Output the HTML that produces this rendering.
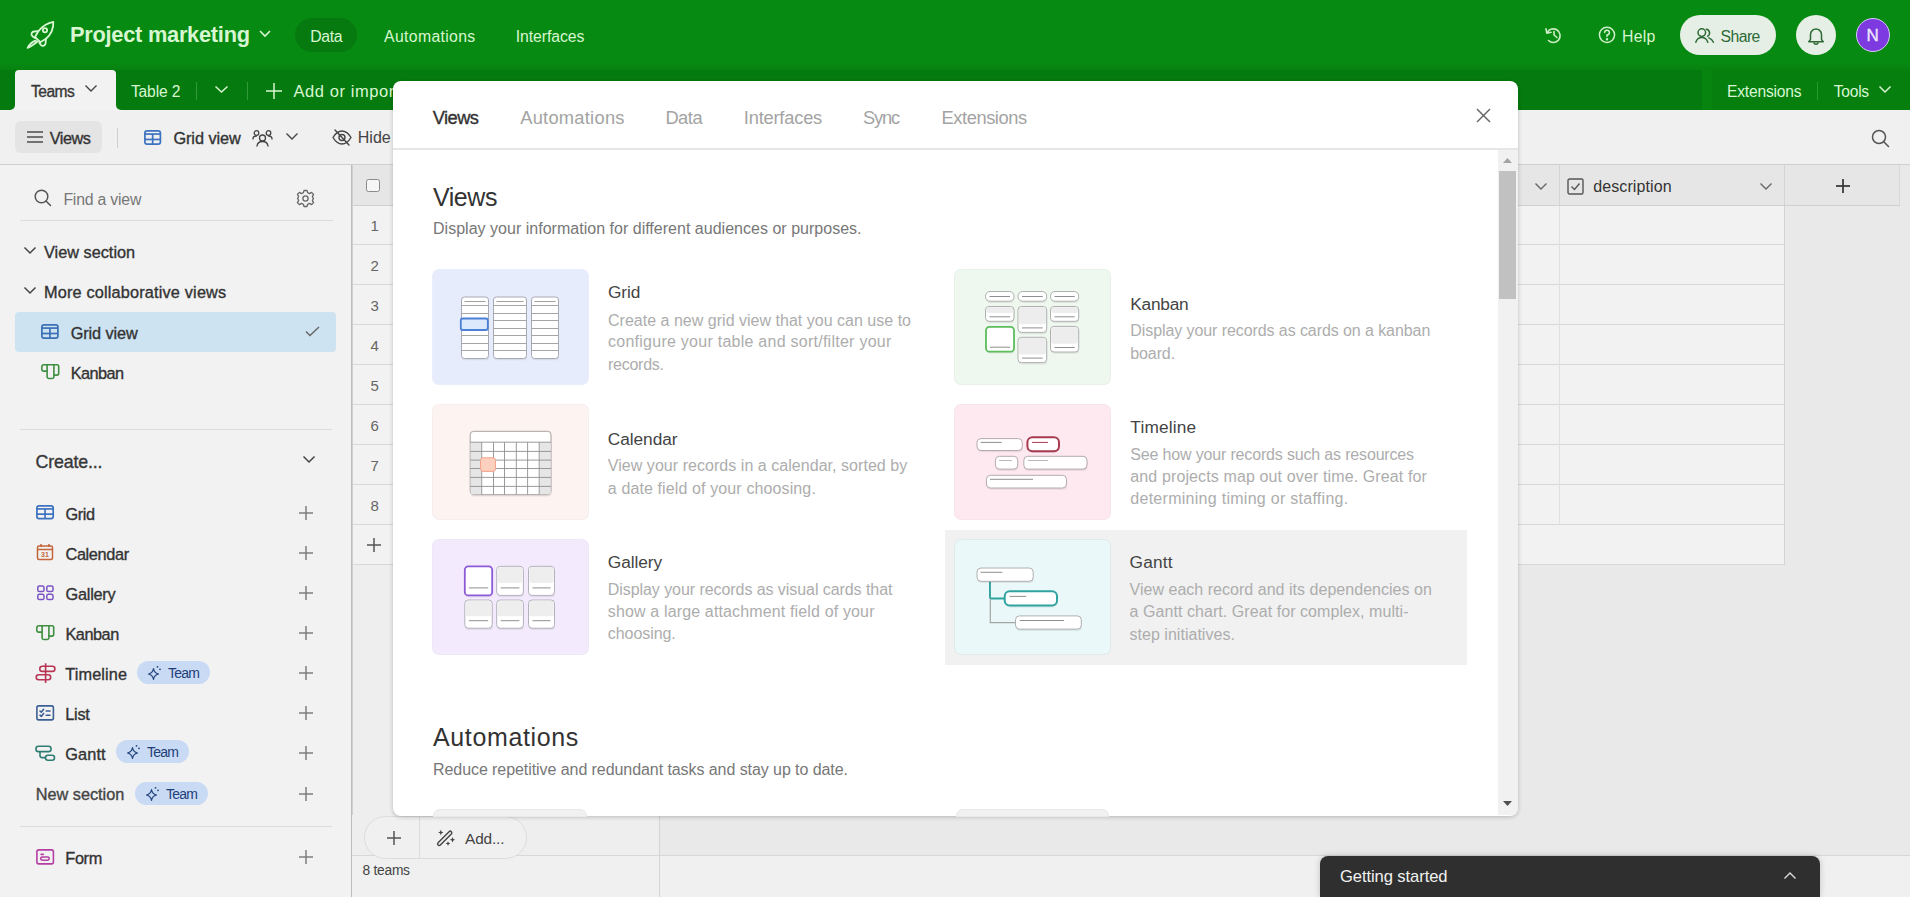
<!DOCTYPE html><html><head><meta charset="utf-8"><style>
html,body{margin:0;padding:0;width:1910px;height:897px;overflow:hidden;background:#f0f0f0}
body{position:relative;font-family:"Liberation Sans", sans-serif}
.t{position:absolute;white-space:nowrap;line-height:0;font-family:"Liberation Sans", sans-serif}
svg{overflow:visible}
</style></head><body>
<div style="position:absolute;left:0px;top:0px;width:1910px;height:897px;background:#f0f0f0"></div>
<div style="position:absolute;left:0px;top:0px;width:1910px;height:70px;background:#078a11"></div>
<div style="position:absolute;left:0px;top:70px;width:1910px;height:40px;background:#057a0e"></div>
<div style="position:absolute;left:0px;top:62px;width:1910px;height:8px;background:linear-gradient(rgba(0,0,0,0),rgba(0,0,0,.06))"></div>
<div style="position:absolute;left:1702px;top:70px;width:10px;height:40px;background:#078a11;opacity:.6"></div>
<div style="position:absolute;left:1712px;top:70px;width:198px;height:40px;background:#067f0f"></div>
<svg style="position:absolute;left:26px;top:20px;" width="30" height="30" viewBox="0 0 30 30" fill="none"><g stroke="#d8f8d4" stroke-width="1.8" stroke-linecap="round" stroke-linejoin="round" fill="none"><path d="M27.3 1.8 C22 2.8 16.5 6 12.5 11 L9 17 L14.2 22.2 L20 18.8 C25 14.5 27.6 8.5 27.3 1.8 Z"/><circle cx="19" cy="10.3" r="2.1"/><path d="M12.3 11.2 L8.3 11.5 A2.7 2.7 0 0 0 6.4 16.2 L9 18"/><path d="M19.9 19 L19.6 23 A2.7 2.7 0 0 1 14.9 24.9 L13.3 22.8"/><path d="M9.8 20.6 C6.5 21.5 3.5 24 1.6 27.9 C5.5 26.3 8.3 24 11.2 21.8"/></g></svg>
<div class="t" style="left:70.00px;top:35.45px;font-size:21.8px;color:#d8f6d2;font-weight:700;letter-spacing:-0.256px;">Project marketing</div>
<svg style="position:absolute;left:258px;top:29px;" width="14" height="10" viewBox="0 0 14 10" fill="none"><path d="M2 2 L7 7 L12 2" stroke="#d8f6d2" stroke-width="1.6" fill="none"/></svg>
<div style="position:absolute;left:295px;top:18px;width:62px;height:34px;background:#067a0f;border-radius:17px"></div>
<div class="t" style="left:310.30px;top:36.53px;font-size:15.8px;color:#d8f6d2;font-weight:400;letter-spacing:-0.339px;">Data</div>
<div class="t" style="left:384.00px;top:36.53px;font-size:15.8px;color:#d8f6d2;font-weight:400;letter-spacing:0.345px;">Automations</div>
<div class="t" style="left:515.80px;top:36.53px;font-size:15.8px;color:#d8f6d2;font-weight:400;letter-spacing:-0.085px;">Interfaces</div>
<svg style="position:absolute;left:1544px;top:26px;" width="20" height="18" viewBox="0 0 20 18" fill="none"><g stroke="#cdeec8" stroke-width="1.6" fill="none" stroke-linecap="round" stroke-linejoin="round"><path d="M3.3 6.5 A6.8 6.8 0 1 1 4.5 14.5"/><path d="M2 2.8 L2.8 7.2 L7 6.3"/><path d="M10 5.5 V9 L13 11.5"/></g></svg>
<svg style="position:absolute;left:1598px;top:26px;" width="18" height="18" viewBox="0 0 18 18" fill="none"><g stroke="#cdeec8" stroke-width="1.5" fill="none"><circle cx="9" cy="8.8" r="7.6"/><path d="M6.6 6.6 A2.4 2.4 0 1 1 9 9 V10.6" stroke-linecap="round"/><circle cx="9" cy="13.2" r=".5" fill="#cdeec8"/></g></svg>
<div class="t" style="left:1622.00px;top:36.53px;font-size:15.8px;color:#d8f6d2;font-weight:400;letter-spacing:0.277px;">Help</div>
<div style="position:absolute;left:1680px;top:15px;width:96px;height:40px;background:#e6efe6;border-radius:20px"></div>
<svg style="position:absolute;left:1695px;top:28px;" width="20" height="16" viewBox="0 0 20 16" fill="none"><g stroke="#2e6a35" stroke-width="1.5" fill="none" stroke-linecap="round"><circle cx="6.8" cy="4.6" r="3.8"/><path d="M0.8 14.3 C2 10.8 4.2 9.6 6.8 9.6 C9.4 9.6 11.6 10.8 12.8 14.3"/><path d="M11.2 1.2 A3.8 3.8 0 0 1 12.6 8.3"/><path d="M13.8 9.9 C15.8 10.6 17.4 12 18.4 14.3"/></g></svg>
<div class="t" style="left:1720.60px;top:36.53px;font-size:15.8px;color:#2e6a35;font-weight:400;letter-spacing:-0.597px;">Share</div>
<div style="position:absolute;left:1796px;top:15px;width:40px;height:40px;background:#e6efe6;border-radius:50%"></div>
<svg style="position:absolute;left:1806px;top:26px;" width="20" height="20" viewBox="0 0 20 20" fill="none"><g stroke="#2e6a35" stroke-width="1.5" fill="none" stroke-linejoin="round"><path d="M4.5 13.5 V8.5 A5.5 5.5 0 0 1 15.5 8.5 V13.5 L17.2 15.8 H2.8 Z"/><path d="M8 16.2 A2 2 0 0 0 12 16.2"/></g></svg>
<div style="position:absolute;left:1856px;top:18px;width:34px;height:34px;background:#7c3ae0;border-radius:50%;box-sizing:border-box;border:1.5px solid #d9c9f5"></div>
<div class="t" style="left:1866.50px;top:35.61px;font-size:17px;color:#efe6ff;font-weight:400;-webkit-text-stroke:0.35px #efe6ff;">N</div>
<div style="position:absolute;left:15px;top:70px;width:101px;height:42px;background:#f2f2f2;border-radius:4px 4px 0 0"></div>
<div style="position:absolute;left:9px;top:104px;width:6px;height:6px;background:#f0f0f0"></div>
<div style="position:absolute;left:5px;top:100px;width:10px;height:10px;background:#057a0e;border-radius:0 0 5px 0"></div>
<div style="position:absolute;left:116px;top:104px;width:6px;height:6px;background:#f0f0f0"></div>
<div style="position:absolute;left:116px;top:100px;width:10px;height:10px;background:#057a0e;border-radius:0 0 0 5px"></div>
<div class="t" style="left:31.00px;top:91.59px;font-size:15.6px;color:#383838;font-weight:400;letter-spacing:-0.511px;-webkit-text-stroke:0.35px #383838;">Teams</div>
<svg style="position:absolute;left:84px;top:84px;" width="14" height="9" viewBox="0 0 14 9" fill="none"><path d="M1.5 1.5 L7 7 L12.5 1.5" stroke="#444" stroke-width="1.4" fill="none"/></svg>
<div class="t" style="left:130.90px;top:91.59px;font-size:15.6px;color:#d8f6d2;font-weight:400;letter-spacing:-0.118px;">Table 2</div>
<div style="position:absolute;left:196px;top:82px;width:1px;height:18px;background:#2f9a37"></div>
<svg style="position:absolute;left:214px;top:85px;" width="16" height="9" viewBox="0 0 16 9" fill="none"><path d="M1.5 1.5 L7.5 7 L13.5 1.5" stroke="#d8f6d2" stroke-width="1.5" fill="none"/></svg>
<div style="position:absolute;left:247px;top:82px;width:1px;height:18px;background:#2f9a37"></div>
<svg style="position:absolute;left:265px;top:82px;" width="18" height="18" viewBox="0 0 18 18" fill="none"><g stroke="#d8f6d2" stroke-width="1.5"><path d="M9 1 V17"/><path d="M1 9 H17"/></g></svg>
<div class="t" style="left:293.50px;top:91.28px;font-size:16.5px;color:#d8f6d2;font-weight:400;letter-spacing:0.576px;">Add or import</div>
<div class="t" style="left:1727.00px;top:91.59px;font-size:15.6px;color:#d8f6d2;font-weight:400;letter-spacing:-0.187px;">Extensions</div>
<div style="position:absolute;left:1817px;top:82px;width:1px;height:18px;background:#2a9a32"></div>
<div class="t" style="left:1833.80px;top:91.59px;font-size:15.6px;color:#d8f6d2;font-weight:400;letter-spacing:-0.257px;">Tools</div>
<svg style="position:absolute;left:1878px;top:85px;" width="14" height="9" viewBox="0 0 14 9" fill="none"><path d="M1.5 1.5 L7 7 L12.5 1.5" stroke="#d8f6d2" stroke-width="1.5" fill="none"/></svg>
<div style="position:absolute;left:0px;top:110px;width:1910px;height:55px;background:#f0f0f0;border-bottom:1px solid #cfcfcf;box-sizing:border-box"></div>
<div style="position:absolute;left:15px;top:121px;width:87px;height:32px;background:#e4e4e4;border-radius:6px"></div>
<svg style="position:absolute;left:26px;top:130px;" width="18" height="14" viewBox="0 0 18 14" fill="none"><g stroke="#555" stroke-width="1.6"><path d="M1 2 H17"/><path d="M1 7 H17"/><path d="M1 12 H17"/></g></svg>
<div class="t" style="left:49.80px;top:138.35px;font-size:16.3px;color:#333;font-weight:400;letter-spacing:-0.499px;-webkit-text-stroke:0.35px #333;">Views</div>
<div style="position:absolute;left:117px;top:128px;width:1px;height:20px;background:#cfcfcf"></div>
<svg style="position:absolute;left:144.3px;top:130.2px;" width="17.3" height="15" viewBox="0 0 17.3 15" fill="none"><g stroke="#3d72c0" stroke-width="1.7" fill="none"><rect x="0.9" y="0.9" width="15.5" height="13.2" rx="2.2"/><path d="M0.9 4.05 H16.400000000000002"/><path d="M0.9 9.45 H16.400000000000002"/><path d="M8.65 4.05 V14.1"/></g></svg>
<div class="t" style="left:173.40px;top:138.35px;font-size:16.3px;color:#333;font-weight:400;letter-spacing:-0.059px;-webkit-text-stroke:0.35px #333;">Grid view</div>
<svg style="position:absolute;left:252px;top:129px;" width="21" height="18" viewBox="0 0 21 18" fill="none"><g stroke="#444" stroke-width="1.3" fill="none" stroke-linecap="round"><circle cx="10.5" cy="9" r="3"/><path d="M5 17 C5.5 13.5 7.5 12.5 10.5 12.5 C13.5 12.5 15.5 13.5 16 17"/><circle cx="4.5" cy="4" r="2.3"/><circle cx="16.5" cy="4" r="2.3"/><path d="M1 10 C1 8 2.5 7 4.5 7"/><path d="M20 10 C20 8 18.5 7 16.5 7"/></g></svg>
<svg style="position:absolute;left:285px;top:132px;" width="14" height="9" viewBox="0 0 14 9" fill="none"><path d="M1.5 1.5 L7 7 L12.5 1.5" stroke="#444" stroke-width="1.4" fill="none"/></svg>
<svg style="position:absolute;left:332px;top:129px;" width="20" height="17" viewBox="0 0 20 17" fill="none"><g stroke="#444" stroke-width="1.4" fill="none" stroke-linecap="round"><path d="M1 8.5 C4 3.5 7 2 10 2 C13 2 16 3.5 19 8.5 C16 13.5 13 15 10 15 C7 15 4 13.5 1 8.5 Z"/><circle cx="10" cy="8.5" r="3"/><path d="M3 1 L17 16"/></g></svg>
<div class="t" style="left:357.70px;top:138.46px;font-size:16px;color:#444;font-weight:400;letter-spacing:0.040px;">Hide</div>
<svg style="position:absolute;left:1871px;top:129px;" width="19" height="19" viewBox="0 0 19 19" fill="none"><g stroke="#555" stroke-width="1.5" fill="none" stroke-linecap="round"><circle cx="8" cy="8" r="6.5"/><path d="M13 13 L17.5 17.5"/></g></svg>
<div style="position:absolute;left:0px;top:165px;width:352px;height:732px;background:#f2f2f2"></div>
<div style="position:absolute;left:351px;top:165px;width:1px;height:732px;background:#bcbcbc"></div>
<svg style="position:absolute;left:34px;top:189px;" width="18" height="18" viewBox="0 0 18 18" fill="none"><g stroke="#555" stroke-width="1.5" fill="none" stroke-linecap="round"><circle cx="7.5" cy="7.5" r="6.3"/><path d="M12 12 L16.5 16.5"/></g></svg>
<div class="t" style="left:63.40px;top:199.53px;font-size:15.8px;color:#777;font-weight:400;letter-spacing:-0.195px;">Find a view</div>
<svg style="position:absolute;left:296px;top:189px;" width="19" height="19" viewBox="0 0 19 19" fill="none"><g stroke="#666" stroke-width="1.3" fill="none"><circle cx="9.5" cy="9.5" r="2.6"/><path d="M8 1.5 H11 L11.6 3.7 L13.6 4.6 L15.6 3.4 L17.6 5.4 L16.4 7.4 L17.3 9.4 L17.5 9.5 L17.3 9.6 L16.4 11.6 L17.6 13.6 L15.6 15.6 L13.6 14.4 L11.6 15.3 L11 17.5 H8 L7.4 15.3 L5.4 14.4 L3.4 15.6 L1.4 13.6 L2.6 11.6 L1.7 9.6 L1.5 9.5 L1.7 9.4 L2.6 7.4 L1.4 5.4 L3.4 3.4 L5.4 4.6 L7.4 3.7 Z" stroke-linejoin="round"/></g></svg>
<div style="position:absolute;left:20px;top:220px;width:313px;height:1px;background:#dcdcdc"></div>
<svg style="position:absolute;left:23px;top:246px;" width="14" height="9" viewBox="0 0 14 9" fill="none"><path d="M1.5 1.5 L7 7 L12.5 1.5" stroke="#444" stroke-width="1.5" fill="none"/></svg>
<div class="t" style="left:44.00px;top:252.35px;font-size:16.3px;color:#333;font-weight:400;letter-spacing:0.000px;-webkit-text-stroke:0.35px #333;">View section</div>
<svg style="position:absolute;left:23px;top:286px;" width="14" height="9" viewBox="0 0 14 9" fill="none"><path d="M1.5 1.5 L7 7 L12.5 1.5" stroke="#444" stroke-width="1.5" fill="none"/></svg>
<div class="t" style="left:44.00px;top:292.35px;font-size:16.3px;color:#333;font-weight:400;letter-spacing:0.170px;-webkit-text-stroke:0.35px #333;">More collaborative views</div>
<div style="position:absolute;left:15px;top:312px;width:321px;height:40px;background:#cde3f1;border-radius:4px"></div>
<svg style="position:absolute;left:41.1px;top:324.3px;" width="17.8" height="15.1" viewBox="0 0 17.8 15.1" fill="none"><g stroke="#3b6fb6" stroke-width="1.7" fill="none"><rect x="0.9" y="0.9" width="16.0" height="13.299999999999999" rx="2.2"/><path d="M0.9 4.08 H16.900000000000002"/><path d="M0.9 9.51 H16.900000000000002"/><path d="M8.90 4.08 V14.2"/></g></svg>
<div class="t" style="left:70.70px;top:332.85px;font-size:16.3px;color:#333;font-weight:400;letter-spacing:-0.109px;-webkit-text-stroke:0.35px #333;">Grid view</div>
<svg style="position:absolute;left:305px;top:326px;" width="15" height="11" viewBox="0 0 15 11" fill="none"><path d="M1 5.5 L5 9.5 L14 1" stroke="#666" stroke-width="1.4" fill="none"/></svg>
<svg style="position:absolute;left:40.6px;top:364px;" width="19" height="17" viewBox="0 0 19 17" fill="none"><g stroke="#3d8f3f" stroke-width="1.6" fill="none" stroke-linejoin="round"><path d="M2.8 0.8 H16.2 A1.5 1.5 0 0 1 17.7 2.3 V9.3 A1.8 1.8 0 0 1 15.9 11.1 H12.9 V12.7 A1.8 1.8 0 0 1 11.1 14.5 H7.9 A1.8 1.8 0 0 1 6.1 12.7 V7.1 H2.6 A1.8 1.8 0 0 1 0.8 5.3 V2.8 A2 2 0 0 1 2.8 0.8 Z"/><path d="M6.1 0.8 V7.1"/><path d="M12.9 0.8 V11.1"/></g></svg>
<div class="t" style="left:70.70px;top:372.85px;font-size:16.3px;color:#333;font-weight:400;letter-spacing:-0.547px;-webkit-text-stroke:0.35px #333;">Kanban</div>
<div style="position:absolute;left:20px;top:429px;width:312px;height:1px;background:#dcdcdc"></div>
<div class="t" style="left:35.60px;top:461.83px;font-size:17.8px;color:#383838;font-weight:400;letter-spacing:-0.170px;-webkit-text-stroke:0.35px #383838;">Create...</div>
<svg style="position:absolute;left:302px;top:455px;" width="14" height="9" viewBox="0 0 14 9" fill="none"><path d="M1.5 1.5 L7 7 L12.5 1.5" stroke="#444" stroke-width="1.5" fill="none"/></svg>
<svg style="position:absolute;left:36px;top:505.4px;" width="18.1" height="14.5" viewBox="0 0 18.1 14.5" fill="none"><g stroke="#3d72c0" stroke-width="1.7" fill="none"><rect x="0.9" y="0.9" width="16.3" height="12.7" rx="2.2"/><path d="M0.9 3.92 H17.200000000000003"/><path d="M0.9 9.13 H17.200000000000003"/><path d="M9.05 3.92 V13.6"/></g></svg>
<div class="t" style="left:65.50px;top:514.15px;font-size:16.3px;color:#333;font-weight:400;letter-spacing:-0.436px;-webkit-text-stroke:0.35px #333;">Grid</div>
<svg style="position:absolute;left:298px;top:505px;" width="16" height="16" viewBox="0 0 16 16" fill="none"><g stroke="#777" stroke-width="1.4"><path d="M8 1 V15"/><path d="M1 8 H15"/></g></svg>
<svg style="position:absolute;left:36px;top:543px;" width="18" height="18" viewBox="0 0 18 18" fill="none"><g stroke="#c4643a" stroke-width="1.5" fill="none"><rect x="1.5" y="3" width="15" height="13.5" rx="1.5"/><path d="M1.5 6.5 H16.5"/><path d="M5 1 V4 M13 1 V4"/></g><text x="9" y="14.3" font-size="7" font-family="Liberation Sans" font-weight="700" fill="#c4643a" text-anchor="middle">31</text></svg>
<div class="t" style="left:65.50px;top:553.95px;font-size:16.3px;color:#333;font-weight:400;letter-spacing:-0.354px;-webkit-text-stroke:0.35px #333;">Calendar</div>
<svg style="position:absolute;left:298px;top:545px;" width="16" height="16" viewBox="0 0 16 16" fill="none"><g stroke="#777" stroke-width="1.4"><path d="M8 1 V15"/><path d="M1 8 H15"/></g></svg>
<svg style="position:absolute;left:36px;top:584px;" width="19" height="17" viewBox="0 0 19 17" fill="none"><g stroke="#7b52c4" stroke-width="1.5" fill="none"><rect x="1.8" y="2" width="6.2" height="5.6" rx="1.6"/><rect x="10.8" y="2" width="6.2" height="5.6" rx="1.6"/><rect x="1.8" y="10.3" width="6.2" height="5.3" rx="1.6"/><rect x="10.8" y="10.3" width="6.2" height="5.3" rx="1.6"/></g></svg>
<div class="t" style="left:65.50px;top:594.05px;font-size:16.3px;color:#333;font-weight:400;letter-spacing:-0.229px;-webkit-text-stroke:0.35px #333;">Gallery</div>
<svg style="position:absolute;left:298px;top:585px;" width="16" height="16" viewBox="0 0 16 16" fill="none"><g stroke="#777" stroke-width="1.4"><path d="M8 1 V15"/><path d="M1 8 H15"/></g></svg>
<svg style="position:absolute;left:35.6px;top:624.5px;" width="19" height="17" viewBox="0 0 19 17" fill="none"><g stroke="#3d8f3f" stroke-width="1.6" fill="none" stroke-linejoin="round"><path d="M2.8 0.8 H16.2 A1.5 1.5 0 0 1 17.7 2.3 V9.3 A1.8 1.8 0 0 1 15.9 11.1 H12.9 V12.7 A1.8 1.8 0 0 1 11.1 14.5 H7.9 A1.8 1.8 0 0 1 6.1 12.7 V7.1 H2.6 A1.8 1.8 0 0 1 0.8 5.3 V2.8 A2 2 0 0 1 2.8 0.8 Z"/><path d="M6.1 0.8 V7.1"/><path d="M12.9 0.8 V11.1"/></g></svg>
<div class="t" style="left:65.50px;top:634.05px;font-size:16.3px;color:#333;font-weight:400;letter-spacing:-0.487px;-webkit-text-stroke:0.35px #333;">Kanban</div>
<svg style="position:absolute;left:298px;top:625px;" width="16" height="16" viewBox="0 0 16 16" fill="none"><g stroke="#777" stroke-width="1.4"><path d="M8 1 V15"/><path d="M1 8 H15"/></g></svg>
<svg style="position:absolute;left:34px;top:662px;" width="22" height="22" viewBox="0 0 22 22" fill="none"><g stroke="#b83556" stroke-width="1.6" fill="none" stroke-linejoin="round"><path d="M11.6 1.3 V21"/><rect x="5.8" y="4.3" width="15.1" height="5.1" rx="2.5"/><rect x="2.2" y="12.7" width="14.5" height="5.1" rx="2.5"/></g></svg>
<div class="t" style="left:65.30px;top:673.85px;font-size:16.3px;color:#333;font-weight:400;letter-spacing:0.105px;-webkit-text-stroke:0.35px #333;">Timeline</div>
<div style="position:absolute;left:137px;top:661px;width:73px;height:23px;background:#c9daf5;border-radius:12px"></div>
<svg style="position:absolute;left:147px;top:665px;" width="16" height="16" viewBox="0 0 16 16" fill="none"><path d="M6.5 3.5 C7 7 8 8.2 11.5 9 C8 9.8 7 11 6.5 14.5 C6 11 5 9.8 1.5 9 C5 8.2 6 7 6.5 3.5 Z" stroke="#26487f" stroke-width="1.2" fill="none" stroke-linejoin="round"/><circle cx="10.5" cy="1.8" r=".9" fill="#26487f"/><circle cx="13" cy="4.3" r=".9" fill="#26487f"/></svg>
<div class="t" style="left:168.00px;top:672.65px;font-size:14px;color:#1e3f7a;font-weight:400;letter-spacing:-0.743px;">Team</div>
<svg style="position:absolute;left:298px;top:665px;" width="16" height="16" viewBox="0 0 16 16" fill="none"><g stroke="#777" stroke-width="1.4"><path d="M8 1 V15"/><path d="M1 8 H15"/></g></svg>
<svg style="position:absolute;left:35px;top:704px;" width="20" height="18" viewBox="0 0 20 18" fill="none"><g stroke="#3c5f95" stroke-width="1.6" fill="none" stroke-linecap="round" stroke-linejoin="round"><rect x="1.9" y="1.9" width="16.5" height="14" rx="1.8"/><path d="M5 7 L6.3 8.2 L8.6 5.3"/><path d="M5 11.2 L6.3 12.4 L8.6 9.5"/><path d="M11.2 7 H15 M11.2 11.3 H15"/></g></svg>
<div class="t" style="left:65.30px;top:714.05px;font-size:16.3px;color:#333;font-weight:400;letter-spacing:-0.282px;-webkit-text-stroke:0.35px #333;">List</div>
<svg style="position:absolute;left:298px;top:705px;" width="16" height="16" viewBox="0 0 16 16" fill="none"><g stroke="#777" stroke-width="1.4"><path d="M8 1 V15"/><path d="M1 8 H15"/></g></svg>
<svg style="position:absolute;left:34px;top:744px;" width="22" height="18" viewBox="0 0 22 18" fill="none"><g stroke="#2f7d72" stroke-width="1.6" fill="none" stroke-linejoin="round"><rect x="2" y="2.3" width="15" height="5.3" rx="2.4"/><rect x="11.5" y="11.2" width="9" height="5" rx="2.4"/><path d="M6 7.6 V11.6 A2 2 0 0 0 8 13.6 H11.5"/></g></svg>
<div class="t" style="left:65.30px;top:754.05px;font-size:16.3px;color:#333;font-weight:400;letter-spacing:0.112px;-webkit-text-stroke:0.35px #333;">Gantt</div>
<div style="position:absolute;left:116px;top:740px;width:73px;height:23px;background:#c9daf5;border-radius:12px"></div>
<svg style="position:absolute;left:126px;top:744px;" width="16" height="16" viewBox="0 0 16 16" fill="none"><path d="M6.5 3.5 C7 7 8 8.2 11.5 9 C8 9.8 7 11 6.5 14.5 C6 11 5 9.8 1.5 9 C5 8.2 6 7 6.5 3.5 Z" stroke="#26487f" stroke-width="1.2" fill="none" stroke-linejoin="round"/><circle cx="10.5" cy="1.8" r=".9" fill="#26487f"/><circle cx="13" cy="4.3" r=".9" fill="#26487f"/></svg>
<div class="t" style="left:147.00px;top:751.65px;font-size:14px;color:#1e3f7a;font-weight:400;letter-spacing:-0.743px;">Team</div>
<svg style="position:absolute;left:298px;top:745px;" width="16" height="16" viewBox="0 0 16 16" fill="none"><g stroke="#777" stroke-width="1.4"><path d="M8 1 V15"/><path d="M1 8 H15"/></g></svg>
<div class="t" style="left:35.80px;top:794.05px;font-size:16.3px;color:#444;font-weight:400;letter-spacing:-0.025px;-webkit-text-stroke:0.35px #444;">New section</div>
<div style="position:absolute;left:135px;top:782px;width:73px;height:23px;background:#c9daf5;border-radius:12px"></div>
<svg style="position:absolute;left:145px;top:786px;" width="16" height="16" viewBox="0 0 16 16" fill="none"><path d="M6.5 3.5 C7 7 8 8.2 11.5 9 C8 9.8 7 11 6.5 14.5 C6 11 5 9.8 1.5 9 C5 8.2 6 7 6.5 3.5 Z" stroke="#26487f" stroke-width="1.2" fill="none" stroke-linejoin="round"/><circle cx="10.5" cy="1.8" r=".9" fill="#26487f"/><circle cx="13" cy="4.3" r=".9" fill="#26487f"/></svg>
<div class="t" style="left:166.00px;top:793.65px;font-size:14px;color:#1e3f7a;font-weight:400;letter-spacing:-0.743px;">Team</div>
<svg style="position:absolute;left:298px;top:786px;" width="16" height="16" viewBox="0 0 16 16" fill="none"><g stroke="#777" stroke-width="1.4"><path d="M8 1 V15"/><path d="M1 8 H15"/></g></svg>
<div style="position:absolute;left:20px;top:826px;width:312px;height:1px;background:#dcdcdc"></div>
<svg style="position:absolute;left:35px;top:848px;" width="20" height="17" viewBox="0 0 20 17" fill="none"><g stroke="#b53fa5" stroke-width="1.6" fill="none" stroke-linecap="round"><rect x="1.9" y="1.9" width="16.5" height="14" rx="1.8"/><path d="M6.2 6.4 H8.2"/><rect x="5.7" y="9" width="8.5" height="3.2" rx="1.6"/></g></svg>
<div class="t" style="left:65.30px;top:858.35px;font-size:16.3px;color:#333;font-weight:400;letter-spacing:-0.354px;-webkit-text-stroke:0.35px #333;">Form</div>
<svg style="position:absolute;left:298px;top:849px;" width="16" height="16" viewBox="0 0 16 16" fill="none"><g stroke="#777" stroke-width="1.4"><path d="M8 1 V15"/><path d="M1 8 H15"/></g></svg>
<div style="position:absolute;left:352px;top:165px;width:1558px;height:690px;background:#e9e9e9"></div>
<div style="position:absolute;left:352px;top:165px;width:41px;height:41px;background:#e6e6e6;border-bottom:1px solid #d0d0d0;box-sizing:border-box"></div>
<div style="position:absolute;left:366px;top:179px;width:12px;height:11px;border:1px solid #8a8a8a;border-radius:2.5px;background:#f6f6f6"></div>
<div style="position:absolute;left:352px;top:205px;width:41px;height:40px;background:#f2f2f2;border-bottom:1px solid #d8d8d8;box-sizing:border-box"></div>
<div class="t" style="left:370.50px;top:226.40px;font-size:15px;color:#666;font-weight:400;">1</div>
<div style="position:absolute;left:352px;top:245px;width:41px;height:40px;background:#f2f2f2;border-bottom:1px solid #d8d8d8;box-sizing:border-box"></div>
<div class="t" style="left:370.50px;top:266.40px;font-size:15px;color:#666;font-weight:400;">2</div>
<div style="position:absolute;left:352px;top:285px;width:41px;height:40px;background:#f2f2f2;border-bottom:1px solid #d8d8d8;box-sizing:border-box"></div>
<div class="t" style="left:370.50px;top:306.40px;font-size:15px;color:#666;font-weight:400;">3</div>
<div style="position:absolute;left:352px;top:325px;width:41px;height:40px;background:#f2f2f2;border-bottom:1px solid #d8d8d8;box-sizing:border-box"></div>
<div class="t" style="left:370.50px;top:346.40px;font-size:15px;color:#666;font-weight:400;">4</div>
<div style="position:absolute;left:352px;top:365px;width:41px;height:40px;background:#f2f2f2;border-bottom:1px solid #d8d8d8;box-sizing:border-box"></div>
<div class="t" style="left:370.50px;top:386.40px;font-size:15px;color:#666;font-weight:400;">5</div>
<div style="position:absolute;left:352px;top:405px;width:41px;height:40px;background:#f2f2f2;border-bottom:1px solid #d8d8d8;box-sizing:border-box"></div>
<div class="t" style="left:370.50px;top:426.40px;font-size:15px;color:#666;font-weight:400;">6</div>
<div style="position:absolute;left:352px;top:445px;width:41px;height:40px;background:#f2f2f2;border-bottom:1px solid #d8d8d8;box-sizing:border-box"></div>
<div class="t" style="left:370.50px;top:466.40px;font-size:15px;color:#666;font-weight:400;">7</div>
<div style="position:absolute;left:352px;top:485px;width:41px;height:40px;background:#f2f2f2;border-bottom:1px solid #d8d8d8;box-sizing:border-box"></div>
<div class="t" style="left:370.50px;top:506.40px;font-size:15px;color:#666;font-weight:400;">8</div>
<div style="position:absolute;left:352px;top:525px;width:41px;height:40px;background:#f2f2f2;border-bottom:1px solid #d8d8d8;box-sizing:border-box"></div>
<div style="position:absolute;left:352px;top:565px;width:41px;height:250px;background:#eeeeee"></div>
<div style="position:absolute;left:352px;top:165px;width:1px;height:690px;background:#d0d0d0"></div>
<svg style="position:absolute;left:366px;top:537px;" width="16" height="16" viewBox="0 0 16 16" fill="none"><g stroke="#555" stroke-width="1.5"><path d="M8 1 V15"/><path d="M1 8 H15"/></g></svg>
<div style="position:absolute;left:1518px;top:165px;width:267px;height:41px;background:#e6e6e6;border-bottom:1px solid #d0d0d0;box-sizing:border-box"></div>
<div style="position:absolute;left:1785px;top:165px;width:115px;height:41px;background:#e6e6e6;border-bottom:1px solid #d0d0d0;border-right:1px solid #d8d8d8;box-sizing:border-box"></div>
<div style="position:absolute;left:1559px;top:165px;width:1px;height:40px;background:#d4d4d4"></div>
<div style="position:absolute;left:1784px;top:165px;width:1px;height:400px;background:#d4d4d4"></div>
<svg style="position:absolute;left:1534px;top:182px;" width="14" height="9" viewBox="0 0 14 9" fill="none"><path d="M1.5 1.5 L7 7 L12.5 1.5" stroke="#666" stroke-width="1.4" fill="none"/></svg>
<svg style="position:absolute;left:1567px;top:178px;" width="17" height="17" viewBox="0 0 17 17" fill="none"><g stroke="#555" stroke-width="1.4" fill="none"><rect x="1" y="1" width="15" height="15" rx="1.5"/><path d="M4.5 8.5 L7.5 11.5 L12.5 5.5"/></g></svg>
<div class="t" style="left:1593.20px;top:187.16px;font-size:16px;color:#333;font-weight:400;letter-spacing:0.104px;">description</div>
<svg style="position:absolute;left:1759px;top:182px;" width="14" height="9" viewBox="0 0 14 9" fill="none"><path d="M1.5 1.5 L7 7 L12.5 1.5" stroke="#666" stroke-width="1.4" fill="none"/></svg>
<svg style="position:absolute;left:1835px;top:178px;" width="16" height="16" viewBox="0 0 16 16" fill="none"><g stroke="#333" stroke-width="1.7"><path d="M8 1 V15"/><path d="M1 8 H15"/></g></svg>
<div style="position:absolute;left:1518px;top:205px;width:266px;height:40px;background:#f2f2f2;border-bottom:1px solid #d8d8d8;box-sizing:border-box"></div>
<div style="position:absolute;left:1559px;top:205px;width:1px;height:40px;background:#e0e0e0"></div>
<div style="position:absolute;left:1518px;top:245px;width:266px;height:40px;background:#f2f2f2;border-bottom:1px solid #d8d8d8;box-sizing:border-box"></div>
<div style="position:absolute;left:1559px;top:245px;width:1px;height:40px;background:#e0e0e0"></div>
<div style="position:absolute;left:1518px;top:285px;width:266px;height:40px;background:#f2f2f2;border-bottom:1px solid #d8d8d8;box-sizing:border-box"></div>
<div style="position:absolute;left:1559px;top:285px;width:1px;height:40px;background:#e0e0e0"></div>
<div style="position:absolute;left:1518px;top:325px;width:266px;height:40px;background:#f2f2f2;border-bottom:1px solid #d8d8d8;box-sizing:border-box"></div>
<div style="position:absolute;left:1559px;top:325px;width:1px;height:40px;background:#e0e0e0"></div>
<div style="position:absolute;left:1518px;top:365px;width:266px;height:40px;background:#f2f2f2;border-bottom:1px solid #d8d8d8;box-sizing:border-box"></div>
<div style="position:absolute;left:1559px;top:365px;width:1px;height:40px;background:#e0e0e0"></div>
<div style="position:absolute;left:1518px;top:405px;width:266px;height:40px;background:#f2f2f2;border-bottom:1px solid #d8d8d8;box-sizing:border-box"></div>
<div style="position:absolute;left:1559px;top:405px;width:1px;height:40px;background:#e0e0e0"></div>
<div style="position:absolute;left:1518px;top:445px;width:266px;height:40px;background:#f2f2f2;border-bottom:1px solid #d8d8d8;box-sizing:border-box"></div>
<div style="position:absolute;left:1559px;top:445px;width:1px;height:40px;background:#e0e0e0"></div>
<div style="position:absolute;left:1518px;top:485px;width:266px;height:40px;background:#f2f2f2;border-bottom:1px solid #d8d8d8;box-sizing:border-box"></div>
<div style="position:absolute;left:1559px;top:485px;width:1px;height:40px;background:#e0e0e0"></div>
<div style="position:absolute;left:1518px;top:525px;width:266px;height:40px;background:#f2f2f2;border-bottom:1px solid #d8d8d8;box-sizing:border-box"></div>
<div style="position:absolute;left:352px;top:205px;width:41px;height:1px;background:#d0d0d0"></div>
<div style="position:absolute;left:1518px;top:205px;width:382px;height:1px;background:#d0d0d0"></div>
<div style="position:absolute;left:352px;top:855px;width:1558px;height:42px;background:#f0f0f0;border-top:1px solid #d8d8d8;box-sizing:border-box"></div>
<div style="position:absolute;left:352px;top:815px;width:308px;height:40px;background:#eeeeee"></div>
<div style="position:absolute;left:659px;top:815px;width:1px;height:82px;background:#d4d4d4"></div>
<div class="t" style="left:362.50px;top:871.22px;font-size:13.8px;color:#444;font-weight:400;letter-spacing:-0.260px;">8 teams</div>
<div style="position:absolute;left:364px;top:816px;width:163px;height:43px;background:#f0f0f0;border:1px solid #dcdcdc;border-radius:22px;box-sizing:border-box"></div>
<div style="position:absolute;left:419px;top:816px;width:1px;height:43px;background:#dcdcdc"></div>
<svg style="position:absolute;left:386px;top:830px;" width="16" height="16" viewBox="0 0 16 16" fill="none"><g stroke="#555" stroke-width="1.5"><path d="M8 1 V15"/><path d="M1 8 H15"/></g></svg>
<svg style="position:absolute;left:435px;top:828px;" width="20" height="20" viewBox="0 0 20 20" fill="none"><path d="M4.2 15.8 L15.2 4.8" stroke="#444" stroke-width="4.6" stroke-linecap="round"/><path d="M4.2 15.8 L15.2 4.8" stroke="#f0f0f0" stroke-width="1.8" stroke-linecap="round"/><g fill="#444"><path d="M5.8 1.8 L6.6 3.7 L8.5 4.5 L6.6 5.3 L5.8 7.2 L5 5.3 L3.1 4.5 L5 3.7 Z"/><path d="M17.5 9 L18.3 10.9 L20.2 11.7 L18.3 12.5 L17.5 14.4 L16.7 12.5 L14.8 11.7 L16.7 10.9 Z"/><path d="M13 13.2 L13.7 14.8 L15.3 15.5 L13.7 16.2 L13 17.8 L12.3 16.2 L10.7 15.5 L12.3 14.8 Z"/></g></svg>
<div class="t" style="left:465.00px;top:839.16px;font-size:15.4px;color:#444;font-weight:400;letter-spacing:-0.134px;">Add...</div>
<div style="position:absolute;left:1320px;top:856px;width:500px;height:41px;background:#2f2f2f;border-radius:8px 8px 0 0;box-shadow:0 0 6px rgba(0,0,0,.2)"></div>
<div class="t" style="left:1340.00px;top:877.25px;font-size:16.6px;color:#f2f2f2;font-weight:400;letter-spacing:-0.093px;">Getting started</div>
<svg style="position:absolute;left:1783px;top:871px;" width="14" height="9" viewBox="0 0 14 9" fill="none"><path d="M1.5 7.5 L7 2 L12.5 7.5" stroke="#ddd" stroke-width="1.4" fill="none"/></svg>
<div style="position:absolute;left:393px;top:81px;width:1125px;height:735px;background:#fff;border-radius:8px;box-shadow:0 1px 4px rgba(0,0,0,.22)"></div>
<div class="t" style="left:432.80px;top:118.26px;font-size:18.3px;color:#333;font-weight:400;letter-spacing:-0.574px;-webkit-text-stroke:0.35px #333;">Views</div>
<div class="t" style="left:520.20px;top:118.26px;font-size:18.3px;color:#a3a3a3;font-weight:400;letter-spacing:0.265px;">Automations</div>
<div class="t" style="left:665.40px;top:118.26px;font-size:18.3px;color:#a3a3a3;font-weight:400;letter-spacing:-0.468px;">Data</div>
<div class="t" style="left:743.80px;top:118.26px;font-size:18.3px;color:#a3a3a3;font-weight:400;letter-spacing:-0.204px;">Interfaces</div>
<div class="t" style="left:863.00px;top:118.26px;font-size:18.3px;color:#a3a3a3;font-weight:400;letter-spacing:-1.139px;">Sync</div>
<div class="t" style="left:941.50px;top:118.26px;font-size:18.3px;color:#a3a3a3;font-weight:400;letter-spacing:-0.421px;">Extensions</div>
<div style="position:absolute;left:393px;top:148px;width:1125px;height:2px;background:#e6e6e6"></div>
<svg style="position:absolute;left:1476px;top:108px;" width="15" height="15" viewBox="0 0 15 15" fill="none"><g stroke="#666" stroke-width="1.5"><path d="M1 1 L14 14"/><path d="M14 1 L1 14"/></g></svg>
<div style="position:absolute;left:1498px;top:150px;width:20px;height:665px;background:#f1f1f1;border-radius:0 0 8px 0"></div>
<div style="position:absolute;left:1499px;top:171px;width:17px;height:128px;background:#c1c1c1"></div>
<svg style="position:absolute;left:1502px;top:157px;" width="11" height="7" viewBox="0 0 11 7" fill="none"><path d="M1 6 L5.5 1 L10 6 Z" fill="#a3a3a3"/></svg>
<svg style="position:absolute;left:1502px;top:800px;" width="11" height="7" viewBox="0 0 11 7" fill="none"><path d="M1 1 L5.5 6 L10 1 Z" fill="#505050"/></svg>
<div class="t" style="left:433.00px;top:197.04px;font-size:25px;color:#333;font-weight:400;letter-spacing:-0.462px;">Views</div>
<div class="t" style="left:433.00px;top:229.26px;font-size:16.0px;color:#777;font-weight:400;letter-spacing:0.018px;">Display your information for different audiences or purposes.</div>
<div class="t" style="left:433.00px;top:737.34px;font-size:25px;color:#333;font-weight:400;letter-spacing:0.630px;">Automations</div>
<div class="t" style="left:433.00px;top:769.76px;font-size:16.0px;color:#777;font-weight:400;letter-spacing:-0.069px;">Reduce repetitive and redundant tasks and stay up to date.</div>
<div style="position:absolute;left:433px;top:270px;width:155px;height:114px;background:#e6ecfc;border-radius:6px;box-shadow:0 0 0 1px #e9eefb"></div>
<svg style="position:absolute;left:433px;top:270px;" width="155" height="114" viewBox="0 0 155 114" fill="none"><rect x="29.0" y="28.8" width="27.0" height="61.5" rx="3" fill="rgba(0,0,0,.07)"/><rect x="28.5" y="27" width="27.0" height="61.5" rx="3" fill="#fff" stroke="#a9a9b4" stroke-width="1"/><path d="M31.5 31.5 H52.5" stroke="#a0a0a0" stroke-width="1"/><path d="M28.5 35.5 H55.5" stroke="#a5a5a5" stroke-width="1"/><path d="M28.5 43.5 H55.5" stroke="#a5a5a5" stroke-width="1"/><path d="M28.5 50.5 H55.5" stroke="#a5a5a5" stroke-width="1"/><path d="M28.5 58.5 H55.5" stroke="#a5a5a5" stroke-width="1"/><path d="M28.5 65.5 H55.5" stroke="#a5a5a5" stroke-width="1"/><path d="M28.5 73.5 H55.5" stroke="#a5a5a5" stroke-width="1"/><path d="M28.5 80.5 H55.5" stroke="#a5a5a5" stroke-width="1"/><rect x="61.0" y="28.8" width="33.0" height="61.5" rx="3" fill="rgba(0,0,0,.07)"/><rect x="60.5" y="27" width="33.0" height="61.5" rx="3" fill="#fff" stroke="#a9a9b4" stroke-width="1"/><path d="M63.5 31.5 H90.5" stroke="#a0a0a0" stroke-width="1"/><path d="M60.5 35.5 H93.5" stroke="#a5a5a5" stroke-width="1"/><path d="M60.5 43.5 H93.5" stroke="#a5a5a5" stroke-width="1"/><path d="M60.5 50.5 H93.5" stroke="#a5a5a5" stroke-width="1"/><path d="M60.5 58.5 H93.5" stroke="#a5a5a5" stroke-width="1"/><path d="M60.5 65.5 H93.5" stroke="#a5a5a5" stroke-width="1"/><path d="M60.5 73.5 H93.5" stroke="#a5a5a5" stroke-width="1"/><path d="M60.5 80.5 H93.5" stroke="#a5a5a5" stroke-width="1"/><rect x="99.0" y="28.8" width="27.0" height="61.5" rx="3" fill="rgba(0,0,0,.07)"/><rect x="98.5" y="27" width="27.0" height="61.5" rx="3" fill="#fff" stroke="#a9a9b4" stroke-width="1"/><path d="M101.5 31.5 H122.5" stroke="#a0a0a0" stroke-width="1"/><path d="M98.5 35.5 H125.5" stroke="#a5a5a5" stroke-width="1"/><path d="M98.5 43.5 H125.5" stroke="#a5a5a5" stroke-width="1"/><path d="M98.5 50.5 H125.5" stroke="#a5a5a5" stroke-width="1"/><path d="M98.5 58.5 H125.5" stroke="#a5a5a5" stroke-width="1"/><path d="M98.5 65.5 H125.5" stroke="#a5a5a5" stroke-width="1"/><path d="M98.5 73.5 H125.5" stroke="#a5a5a5" stroke-width="1"/><path d="M98.5 80.5 H125.5" stroke="#a5a5a5" stroke-width="1"/><rect x="27.8" y="48.5" width="27" height="11.5" rx="2" fill="#dce8fb" stroke="#4a80d6" stroke-width="1.8"/></svg>
<div class="t" style="left:608.00px;top:291.61px;font-size:17.3px;color:#444;font-weight:400;letter-spacing:-0.132px;">Grid</div>
<div class="t" style="left:608.00px;top:320.66px;font-size:16.0px;color:#adadad;font-weight:400;letter-spacing:0.015px;">Create a new grid view that you can use to</div>
<div class="t" style="left:608.00px;top:342.16px;font-size:16.0px;color:#adadad;font-weight:400;letter-spacing:0.256px;">configure your table and sort/filter your</div>
<div class="t" style="left:608.00px;top:364.96px;font-size:16.0px;color:#adadad;font-weight:400;letter-spacing:-0.251px;">records.</div>
<div style="position:absolute;left:433px;top:405px;width:155px;height:114px;background:#fdf3f1;border-radius:6px;box-shadow:0 0 0 1px #f6eeee"></div>
<svg style="position:absolute;left:433px;top:405px;" width="155" height="114" viewBox="0 0 155 114" fill="none"><rect x="37.7" y="28.1" width="80.8" height="63.400000000000006" rx="3.5" fill="rgba(0,0,0,.07)"/><rect x="37.2" y="26.3" width="80.8" height="63.400000000000006" rx="3.5" fill="#fff" stroke="#a9a0a0" stroke-width="1"/><rect x="37.7" y="37.2" width="10.5" height="52" fill="#e6e6e6"/><rect x="106.6" y="37.2" width="10.9" height="52" fill="#e6e6e6"/><path d="M48.7 37.2 V89.5" stroke="#8f8f8f" stroke-width="0.9"/><path d="M60.5 37.2 V89.5" stroke="#8f8f8f" stroke-width="0.9"/><path d="M71.5 37.2 V89.5" stroke="#8f8f8f" stroke-width="0.9"/><path d="M83.3 37.2 V89.5" stroke="#8f8f8f" stroke-width="0.9"/><path d="M94.6 37.2 V89.5" stroke="#8f8f8f" stroke-width="0.9"/><path d="M106.2 37.2 V89.5" stroke="#8f8f8f" stroke-width="0.9"/><path d="M37.2 37.2 H118" stroke="#8f8f8f" stroke-width="0.9"/><path d="M37.2 46.4 H118" stroke="#8f8f8f" stroke-width="0.9"/><path d="M37.2 55.1 H118" stroke="#8f8f8f" stroke-width="0.9"/><path d="M37.2 63.5 H118" stroke="#8f8f8f" stroke-width="0.9"/><path d="M37.2 72.4 H118" stroke="#8f8f8f" stroke-width="0.9"/><path d="M37.2 81.4 H118" stroke="#8f8f8f" stroke-width="0.9"/><rect x="47.5" y="52.8" width="15" height="13.6" rx="2.5" fill="#fccfbf" stroke="#f3a48a" stroke-width="1"/></svg>
<div class="t" style="left:607.80px;top:439.11px;font-size:17.3px;color:#444;font-weight:400;letter-spacing:-0.063px;">Calendar</div>
<div class="t" style="left:607.80px;top:465.76px;font-size:16.0px;color:#adadad;font-weight:400;letter-spacing:0.044px;">View your records in a calendar, sorted by</div>
<div class="t" style="left:607.80px;top:489.36px;font-size:16.0px;color:#adadad;font-weight:400;letter-spacing:0.119px;">a date field of your choosing.</div>
<div style="position:absolute;left:433px;top:540px;width:155px;height:114px;background:#f3ebfd;border-radius:6px;box-shadow:0 0 0 1px #eee8f6"></div>
<svg style="position:absolute;left:433px;top:540px;" width="155" height="114" viewBox="0 0 155 114" fill="none"><rect x="32.3" y="28.1" width="27.400000000000002" height="29.099999999999998" rx="3.5" fill="rgba(0,0,0,.07)"/><rect x="31.8" y="26.3" width="27.400000000000002" height="29.099999999999998" rx="3.5" fill="#fff" stroke="#8c5ad8" stroke-width="1.8"/><path d="M35.8 47.9 H55.2" stroke="#8f8f8f" stroke-width="1"/><rect x="64.2" y="28.1" width="26.700000000000003" height="29.099999999999998" rx="3.5" fill="rgba(0,0,0,.07)"/><rect x="63.7" y="26.3" width="26.700000000000003" height="29.099999999999998" rx="3.5" fill="#fff" stroke="#b4b0bc" stroke-width="1"/><rect x="64.5" y="27.1" width="25.1" height="16.005" rx="2.5" fill="#eeeeee"/><path d="M67.7 47.9 H86.4" stroke="#8f8f8f" stroke-width="1"/><rect x="96.0" y="28.1" width="26.0" height="29.099999999999998" rx="3.5" fill="rgba(0,0,0,.07)"/><rect x="95.5" y="26.3" width="26.0" height="29.099999999999998" rx="3.5" fill="#fff" stroke="#b4b0bc" stroke-width="1"/><rect x="96.3" y="27.1" width="24.4" height="16.005" rx="2.5" fill="#eeeeee"/><path d="M99.5 47.9 H117.5" stroke="#8f8f8f" stroke-width="1"/><rect x="32.3" y="61.8" width="27.400000000000002" height="28.200000000000003" rx="3.5" fill="rgba(0,0,0,.07)"/><rect x="31.8" y="60" width="27.400000000000002" height="28.200000000000003" rx="3.5" fill="#fff" stroke="#b4b0bc" stroke-width="1"/><rect x="32.6" y="60.8" width="25.8" height="15.510000000000003" rx="2.5" fill="#eeeeee"/><path d="M35.8 80.7 H55.2" stroke="#8f8f8f" stroke-width="1"/><rect x="64.2" y="61.8" width="26.700000000000003" height="28.200000000000003" rx="3.5" fill="rgba(0,0,0,.07)"/><rect x="63.7" y="60" width="26.700000000000003" height="28.200000000000003" rx="3.5" fill="#fff" stroke="#b4b0bc" stroke-width="1"/><rect x="64.5" y="60.8" width="25.1" height="15.510000000000003" rx="2.5" fill="#eeeeee"/><path d="M67.7 80.7 H86.4" stroke="#8f8f8f" stroke-width="1"/><rect x="96.0" y="61.8" width="26.0" height="28.200000000000003" rx="3.5" fill="rgba(0,0,0,.07)"/><rect x="95.5" y="60" width="26.0" height="28.200000000000003" rx="3.5" fill="#fff" stroke="#b4b0bc" stroke-width="1"/><rect x="96.3" y="60.8" width="24.4" height="15.510000000000003" rx="2.5" fill="#eeeeee"/><path d="M99.5 80.7 H117.5" stroke="#8f8f8f" stroke-width="1"/></svg>
<div class="t" style="left:607.80px;top:562.01px;font-size:17.3px;color:#444;font-weight:400;letter-spacing:-0.074px;">Gallery</div>
<div class="t" style="left:607.80px;top:590.06px;font-size:16.0px;color:#adadad;font-weight:400;letter-spacing:-0.065px;">Display your records as visual cards that</div>
<div class="t" style="left:607.80px;top:611.86px;font-size:16.0px;color:#adadad;font-weight:400;letter-spacing:0.144px;">show a large attachment field of your</div>
<div class="t" style="left:607.80px;top:634.46px;font-size:16.0px;color:#adadad;font-weight:400;letter-spacing:-0.060px;">choosing.</div>
<div style="position:absolute;left:955px;top:270px;width:155px;height:114px;background:#eef8ef;border-radius:6px;box-shadow:0 0 0 1px #e8f0e8"></div>
<svg style="position:absolute;left:955px;top:270px;" width="155" height="114" viewBox="0 0 155 114" fill="none"><rect x="31.0" y="23.3" width="28.5" height="9.7" rx="4.5" fill="rgba(0,0,0,.07)"/><rect x="30.5" y="21.5" width="28.5" height="9.7" rx="4.5" fill="#fff" stroke="#b0b0b0" stroke-width="1"/><path d="M34.5 26.5 H55" stroke="#8f8f8f" stroke-width="1"/><rect x="63.5" y="23.3" width="28.700000000000003" height="9.7" rx="4.5" fill="rgba(0,0,0,.07)"/><rect x="63" y="21.5" width="28.700000000000003" height="9.7" rx="4.5" fill="#fff" stroke="#b0b0b0" stroke-width="1"/><path d="M67 26.5 H87.7" stroke="#8f8f8f" stroke-width="1"/><rect x="96.0" y="23.3" width="28.200000000000003" height="9.7" rx="4.5" fill="rgba(0,0,0,.07)"/><rect x="95.5" y="21.5" width="28.200000000000003" height="9.7" rx="4.5" fill="#fff" stroke="#b0b0b0" stroke-width="1"/><path d="M99.5 26.5 H119.7" stroke="#8f8f8f" stroke-width="1"/><rect x="31.0" y="38.3" width="28.5" height="14.799999999999997" rx="3.5" fill="rgba(0,0,0,.07)"/><rect x="30.5" y="36.5" width="28.5" height="14.799999999999997" rx="3.5" fill="#fff" stroke="#b0b0b0" stroke-width="1"/><rect x="31.3" y="37.3" width="26.9" height="5.799999999999997" rx="2.5" fill="#ededed"/><path d="M34.5 46.8 H55" stroke="#8f8f8f" stroke-width="1"/><rect x="63.5" y="38.3" width="28.700000000000003" height="25.9" rx="3.5" fill="rgba(0,0,0,.07)"/><rect x="63" y="36.5" width="28.700000000000003" height="25.9" rx="3.5" fill="#fff" stroke="#b0b0b0" stroke-width="1"/><rect x="63.8" y="37.3" width="27.1" height="16.9" rx="2.5" fill="#ededed"/><path d="M67 57.9 H87.7" stroke="#8f8f8f" stroke-width="1"/><rect x="96.0" y="38.3" width="28.200000000000003" height="14.799999999999997" rx="3.5" fill="rgba(0,0,0,.07)"/><rect x="95.5" y="36.5" width="28.200000000000003" height="14.799999999999997" rx="3.5" fill="#fff" stroke="#b0b0b0" stroke-width="1"/><rect x="96.3" y="37.3" width="26.6" height="5.799999999999997" rx="2.5" fill="#ededed"/><path d="M99.5 46.8 H119.7" stroke="#8f8f8f" stroke-width="1"/><rect x="31.5" y="58.599999999999994" width="28" height="24.900000000000006" rx="3.5" fill="rgba(0,0,0,.07)"/><rect x="31" y="56.8" width="28" height="24.900000000000006" rx="3.5" fill="#fff" stroke="#5bbd5b" stroke-width="1.8"/><path d="M35 77.2 H55" stroke="#8f8f8f" stroke-width="1"/><rect x="63.5" y="69.1" width="28.700000000000003" height="25.299999999999997" rx="3.5" fill="rgba(0,0,0,.07)"/><rect x="63" y="67.3" width="28.700000000000003" height="25.299999999999997" rx="3.5" fill="#fff" stroke="#b0b0b0" stroke-width="1"/><rect x="63.8" y="68.1" width="27.1" height="16.299999999999997" rx="2.5" fill="#ededed"/><path d="M67 88.1 H87.7" stroke="#8f8f8f" stroke-width="1"/><rect x="96.0" y="58.199999999999996" width="28.200000000000003" height="25.6" rx="3.5" fill="rgba(0,0,0,.07)"/><rect x="95.5" y="56.4" width="28.200000000000003" height="25.6" rx="3.5" fill="#fff" stroke="#b0b0b0" stroke-width="1"/><rect x="96.3" y="57.199999999999996" width="26.6" height="16.6" rx="2.5" fill="#ededed"/><path d="M99.5 77.5 H119.7" stroke="#8f8f8f" stroke-width="1"/></svg>
<div class="t" style="left:1130.30px;top:304.11px;font-size:17.3px;color:#444;font-weight:400;letter-spacing:-0.257px;">Kanban</div>
<div class="t" style="left:1130.30px;top:330.76px;font-size:16.0px;color:#adadad;font-weight:400;letter-spacing:-0.082px;">Display your records as cards on a kanban</div>
<div class="t" style="left:1130.30px;top:354.36px;font-size:16.0px;color:#adadad;font-weight:400;letter-spacing:-0.112px;">board.</div>
<div style="position:absolute;left:955px;top:405px;width:155px;height:114px;background:#fde9ef;border-radius:6px;box-shadow:0 0 0 1px #f6e6ea"></div>
<svg style="position:absolute;left:955px;top:405px;" width="155" height="114" viewBox="0 0 155 114" fill="none"><rect x="22.5" y="35.4" width="45.3" height="11.899999999999999" rx="4" fill="rgba(0,0,0,.07)"/><rect x="22" y="33.6" width="45.3" height="11.899999999999999" rx="4" fill="#fff" stroke="#b5aaae" stroke-width="1"/><path d="M25.6 37.4 H46.8" stroke="#8f8f8f" stroke-width="1"/><rect x="72.9" y="34.099999999999994" width="31.599999999999994" height="13.900000000000006" rx="5" fill="rgba(0,0,0,.07)"/><rect x="72.4" y="32.3" width="31.599999999999994" height="13.900000000000006" rx="5" fill="#fff" stroke="#a83a50" stroke-width="2"/><path d="M77 37.4 H93" stroke="#a83a50" stroke-width="1"/><rect x="40.9" y="53.099999999999994" width="22.4" height="12.799999999999997" rx="4" fill="rgba(0,0,0,.07)"/><rect x="40.4" y="51.3" width="22.4" height="12.799999999999997" rx="4" fill="#fff" stroke="#b5aaae" stroke-width="1"/><path d="M44 55.5 H57" stroke="#c0b8bb" stroke-width="1"/><rect x="69.3" y="53.099999999999994" width="63.2" height="12.799999999999997" rx="4" fill="rgba(0,0,0,.07)"/><rect x="68.8" y="51.3" width="63.2" height="12.799999999999997" rx="4" fill="#fff" stroke="#b5aaae" stroke-width="1"/><path d="M73 55.5 H93" stroke="#c0b8bb" stroke-width="1"/><rect x="31.9" y="72.1" width="80.1" height="12.700000000000003" rx="4" fill="rgba(0,0,0,.07)"/><rect x="31.4" y="70.3" width="80.1" height="12.700000000000003" rx="4" fill="#fff" stroke="#b5aaae" stroke-width="1"/><path d="M35 74.3 H78" stroke="#8f8f8f" stroke-width="1"/></svg>
<div class="t" style="left:1130.30px;top:427.01px;font-size:17.3px;color:#444;font-weight:400;letter-spacing:0.171px;">Timeline</div>
<div class="t" style="left:1130.30px;top:455.06px;font-size:16.0px;color:#adadad;font-weight:400;letter-spacing:-0.165px;">See how your records such as resources</div>
<div class="t" style="left:1130.30px;top:477.46px;font-size:16.0px;color:#adadad;font-weight:400;letter-spacing:0.123px;">and projects map out over time. Great for</div>
<div class="t" style="left:1130.30px;top:499.46px;font-size:16.0px;color:#adadad;font-weight:400;letter-spacing:0.277px;">determining timing or staffing.</div>
<div style="position:absolute;left:945px;top:530px;width:522px;height:135px;background:#f1f1f1"></div>
<div style="position:absolute;left:955px;top:540px;width:155px;height:114px;background:#eaf8f9;border-radius:6px;box-shadow:0 0 0 1px #e0eaea"></div>
<svg style="position:absolute;left:955px;top:540px;" width="155" height="114" viewBox="0 0 155 114" fill="none"><path d="M35.3 41.3 V82.7 H61" stroke="#a5a5a5" stroke-width="1.2" fill="none"/><path d="M34.9 41.3 V57 A1.5 1.5 0 0 0 36.4 58.5 H50" stroke="#2fa3a0" stroke-width="1.8" fill="none"/><rect x="22.5" y="29.8" width="56.2" height="13.299999999999997" rx="4" fill="rgba(0,0,0,.07)"/><rect x="22" y="28" width="56.2" height="13.299999999999997" rx="4" fill="#fff" stroke="#b0b0b0" stroke-width="1"/><path d="M25.6 32.3 H47.4" stroke="#8f8f8f" stroke-width="1"/><rect x="50.2" y="53.099999999999994" width="52.3" height="14.299999999999997" rx="5" fill="rgba(0,0,0,.07)"/><rect x="49.7" y="51.3" width="52.3" height="14.299999999999997" rx="5" fill="#fff" stroke="#2fa3a0" stroke-width="2"/><path d="M54.5 56.4 H71.2" stroke="#8f8f8f" stroke-width="1"/><rect x="61.0" y="77.7" width="65.8" height="13.199999999999989" rx="4" fill="rgba(0,0,0,.07)"/><rect x="60.5" y="75.9" width="65.8" height="13.199999999999989" rx="4" fill="#fff" stroke="#b0b0b0" stroke-width="1"/><path d="M64.7 80.5 H109" stroke="#8f8f8f" stroke-width="1"/></svg>
<div class="t" style="left:1129.50px;top:561.51px;font-size:17.3px;color:#444;font-weight:400;letter-spacing:0.225px;">Gantt</div>
<div class="t" style="left:1129.50px;top:590.46px;font-size:16.0px;color:#adadad;font-weight:400;letter-spacing:0.029px;">View each record and its dependencies on</div>
<div class="t" style="left:1129.50px;top:612.06px;font-size:16.0px;color:#adadad;font-weight:400;letter-spacing:0.063px;">a Gantt chart. Great for complex, multi-</div>
<div class="t" style="left:1129.50px;top:634.96px;font-size:16.0px;color:#adadad;font-weight:400;letter-spacing:0.027px;">step initiatives.</div>
<div style="position:absolute;left:434px;top:810px;width:152px;height:6px;background:#f1f1f1;border-radius:6px 6px 0 0;box-shadow:0 0 0 1px #e8e8e8"></div>
<div style="position:absolute;left:957px;top:810px;width:151px;height:6px;background:#f1f1f1;border-radius:6px 6px 0 0;box-shadow:0 0 0 1px #e8e8e8"></div>
</body></html>
